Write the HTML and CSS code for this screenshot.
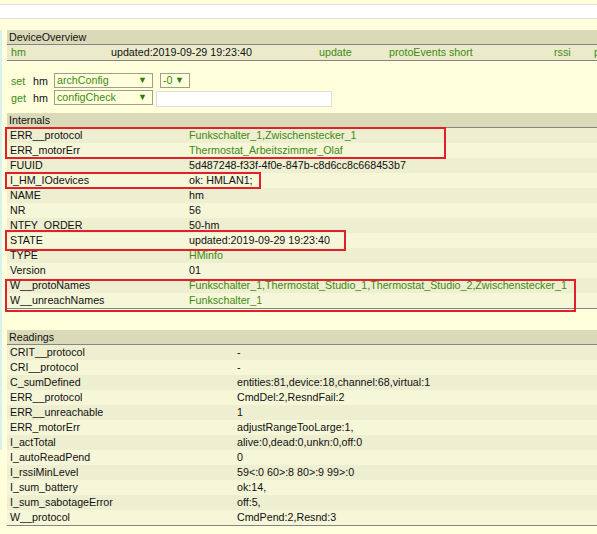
FILE: index.html
```html
<!DOCTYPE html>
<html>
<head>
<meta charset="utf-8">
<link rel="stylesheet" href="styles.css">
</head>
<body>
<div class="page">
  <div class="topbar"></div>
  <div class="main">
    <div class="menu-edge"></div>
    <div class="content">
      <div class="block">
        <div class="bhead">DeviceOverview</div>
        <div class="overview">
          <span class="lnk">hm</span>
          <span>updated:2019-09-29 19:23:40</span>
          <span class="lnk">update</span>
          <span class="lnk">protoEvents short</span>
          <span class="lnk">rssi</span>
          <span class="lnk">protoEvents long</span>
        </div>
      </div>

      <div class="cmds">
        <div class="cmdrow">
          <span class="lnk cmd">set</span>
          <span class="dev">hm</span>
          <span class="sel wide">archConfig<span class="arr">&#9660;</span></span>
          <span class="sel small">-0<span class="arr">&#9660;</span></span>
        </div>
        <div class="cmdrow">
          <span class="lnk cmd">get</span>
          <span class="dev">hm</span>
          <span class="sel wide">configCheck<span class="arr">&#9660;</span></span>
          <span class="inp"></span>
        </div>
      </div>

      <div class="block internals">
        <div class="bhead">Internals</div>
        <div class="rows">
          <div class="row"><span>ERR__protocol</span><span class="lnk">Funkschalter_1,Zwischenstecker_1</span></div>
          <div class="row"><span>ERR_motorErr</span><span class="lnk">Thermostat_Arbeitszimmer_Olaf</span></div>
          <div class="row"><span>FUUID</span><span>5d487248-f33f-4f0e-847b-c8d6cc8c668453b7</span></div>
          <div class="row"><span>I_HM_IOdevices</span><span>ok: HMLAN1;</span></div>
          <div class="row"><span>NAME</span><span>hm</span></div>
          <div class="row"><span>NR</span><span>56</span></div>
          <div class="row"><span>NTFY_ORDER</span><span>50-hm</span></div>
          <div class="row"><span>STATE</span><span>updated:2019-09-29 19:23:40</span></div>
          <div class="row"><span>TYPE</span><span class="lnk">HMinfo</span></div>
          <div class="row"><span>Version</span><span>01</span></div>
          <div class="row"><span>W__protoNames</span><span class="lnk">Funkschalter_1,Thermostat_Studio_1,Thermostat_Studio_2,Zwischenstecker_1</span></div>
          <div class="row"><span>W__unreachNames</span><span class="lnk">Funkschalter_1</span></div>
        </div>
      </div>

      <div class="block readings">
        <div class="bhead">Readings</div>
        <div class="rows">
          <div class="row"><span>CRIT__protocol</span><span>-</span></div>
          <div class="row"><span>CRI__protocol</span><span>-</span></div>
          <div class="row"><span>C_sumDefined</span><span>entities:81,device:18,channel:68,virtual:1</span></div>
          <div class="row"><span>ERR__protocol</span><span>CmdDel:2,ResndFail:2</span></div>
          <div class="row"><span>ERR__unreachable</span><span>1</span></div>
          <div class="row"><span>ERR_motorErr</span><span>adjustRangeTooLarge:1,</span></div>
          <div class="row"><span>I_actTotal</span><span>alive:0,dead:0,unkn:0,off:0</span></div>
          <div class="row"><span>I_autoReadPend</span><span>0</span></div>
          <div class="row"><span>I_rssiMinLevel</span><span>59&lt;:0 60&gt;:8 80&gt;:9 99&gt;:0</span></div>
          <div class="row"><span>I_sum_battery</span><span>ok:14,</span></div>
          <div class="row"><span>I_sum_sabotageError</span><span>off:5,</span></div>
          <div class="row"><span>W__protocol</span><span>CmdPend:2,Resnd:3</span></div>
        </div>
      </div>
    </div>
  </div>

  <div class="mark m1"></div>
  <div class="mark m2"></div>
  <div class="mark m3"></div>
  <div class="mark m4"></div>
</div>
</body>
</html>
```
FILE: styles.css
```css
html, body {
  margin: 0;
  padding: 0;
}
body {
  background: #ffffdc;
  font-family: "Liberation Sans", Arial, sans-serif;
  font-size: 10.7px;
  color: #111;
  overflow: hidden;
}
.page {
  position: relative;
  width: 597px;
  height: 534px;
  overflow: hidden;
}
.topbar {
  margin-top: 4px;
  height: 13px;
  background: #fff;
  border-top: 1px solid #e2e2dc;
  border-bottom: 1px solid #e2e2dc;
}
.main {
  display: flex;
  margin-top: 11px;
}
.menu-edge {
  width: 2px;
  height: 420px;
  background: #d6f2ee;
  flex: none;
}
.content {
  margin-left: 5px;
  flex: none;
  width: 700px;
}
.lnk {
  color: #3e8a14;
}
.bhead {
  height: 14px;
  line-height: 14px;
  background: #dadab9;
  padding-left: 2px;
  color: #111;
}
.overview {
  display: grid;
  grid-template-columns: 100px 208px 70px 165px 40px auto;
  white-space: nowrap;
  height: 15px;
  line-height: 15px;
  padding-left: 4px;
  background: #ebebcc;
  border-top: 1px solid #858585;
  border-bottom: 1px solid #858585;
}
.cmds {
  margin-top: 12px;
  display: flex;
  flex-direction: column;
  gap: 2px;
}
.cmdrow {
  display: flex;
  align-items: center;
  height: 15px;
  padding-left: 4px;
}
.cmd {
  width: 22px;
}
.dev {
  width: 21px;
}
.sel {
  box-sizing: border-box;
  height: 15px;
  line-height: 13px;
  border: 1px solid #a0a08a;
  color: #3e8a14;
  padding-left: 2px;
  display: flex;
  justify-content: space-between;
}
.sel.wide {
  width: 99px;
}
.sel.small {
  width: 30px;
  margin-left: 7px;
}
.arr {
  font-size: 9px;
  color: #2e7a0e;
  padding-right: 5px;
  line-height: 13px;
}
.inp {
  box-sizing: border-box;
  width: 176px;
  height: 16px;
  margin-left: 3px;
  margin-top: 2px;
  background: #fff;
  border: 1px solid #e0e0d8;
}
.internals {
  margin-top: 8px;
}
.readings {
  margin-top: 21px;
}
.rows {
  border-top: 1px solid #858585;
  border-bottom: 1px solid #858585;
}
.row {
  display: grid;
  height: 15px;
  line-height: 15px;
  padding-left: 3px;
  white-space: nowrap;
  background: #f6f6d8;
}
.row:nth-child(odd) {
  background: #eeeed0;
}
.internals .row {
  grid-template-columns: 179px auto;
}
.readings .row {
  grid-template-columns: 227px auto;
}
.mark {
  position: absolute;
  border: 2px solid #e3202a;
  box-sizing: border-box;
}
.m1 { left: 5px; top: 127px; width: 441px; height: 32px; }
.m2 { left: 5px; top: 172px; width: 256px; height: 17px; }
.m3 { left: 5px; top: 230px; width: 341px; height: 21px; }
.m4 { left: 5px; top: 279px; width: 571px; height: 33px; }
```
